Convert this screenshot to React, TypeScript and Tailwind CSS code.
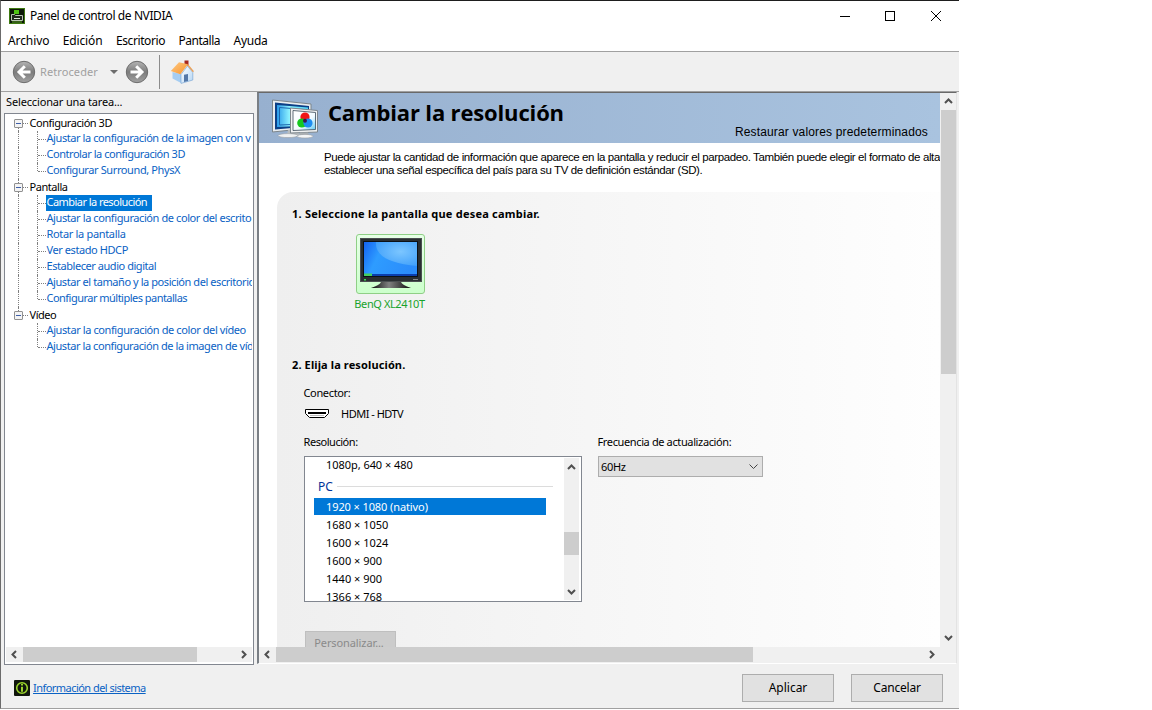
import { clsx } from "clsx";

const menu = [
  { label: "Archivo", track: "tracking-[-0.1px]" },
  { label: "Edición", track: "tracking-[-0.15px]" },
  { label: "Escritorio", track: "tracking-[-0.4px]" },
  { label: "Pantalla", track: "tracking-[-0.5px]" },
  { label: "Ayuda", track: "tracking-[-0.25px]" },
];

const tasks = [
  {
    title: "Configuración 3D",
    track: "tracking-[-0.46px]",
    items: [
      { label: "Ajustar la configuración de la imagen con v", track: "tracking-[-0.42px]" },
      { label: "Controlar la configuración 3D", track: "tracking-[-0.46px]" },
      { label: "Configurar Surround, PhysX", track: "tracking-[-0.39px]" },
    ],
  },
  {
    title: "Pantalla",
    track: "tracking-[-0.45px]",
    items: [
      { label: "Cambiar la resolución", track: "tracking-[-0.55px]", active: true },
      { label: "Ajustar la configuración de color del escrito", track: "tracking-[-0.41px]" },
      { label: "Rotar la pantalla", track: "tracking-[-0.33px]" },
      { label: "Ver estado HDCP", track: "tracking-[-0.42px]" },
      { label: "Establecer audio digital", track: "tracking-[-0.45px]" },
      { label: "Ajustar el tamaño y la posición del escritorio", track: "tracking-[-0.43px]" },
      { label: "Configurar múltiples pantallas", track: "tracking-[-0.52px]" },
    ],
  },
  {
    title: "Vídeo",
    track: "tracking-[-0.45px]",
    items: [
      { label: "Ajustar la configuración de color del vídeo", track: "tracking-[-0.4px]" },
      { label: "Ajustar la configuración de la imagen de víd", track: "tracking-[-0.43px]" },
    ],
  },
];

const resolutions = [
  "1920 × 1080 (nativo)",
  "1680 × 1050",
  "1600 × 1024",
  "1600 × 900",
  "1440 × 900",
  "1366 × 768",
];

const arrows = {
  up: "M1 6 L4.5 2.5 L8 6",
  down: "M1 3 L4.5 6.5 L8 3",
  left: "M6 1 L2.5 4.5 L6 8",
  right: "M3 1 L6.5 4.5 L3 8",
};

function Arrow({ dir }: { dir: keyof typeof arrows }) {
  return (
    <svg width="9" height="9" viewBox="0 0 9 9" className="shrink-0">
      <path d={arrows[dir]} fill="none" stroke="#505050" strokeWidth="2" />
    </svg>
  );
}

function AppIcon() {
  return (
    <svg width="16" height="16" viewBox="0 0 16 16">
      <rect width="16" height="16" fill="#0d1a08" />
      <rect x="0.5" y="0.5" width="15" height="15" fill="none" stroke="#3f7a12" />
      <rect x="5" y="2" width="5" height="4" fill="#4fc414" />
      <path d="M2.5 6.5h3l1 1h7v5h-11z" fill="#20281d" stroke="#b9c4b4" />
      <path d="M5 10.5h6" stroke="#dfe8da" />
      <path d="M3 14h10" stroke="#63a82a" />
    </svg>
  );
}

function NavCircle({ flip }: { flip?: boolean }) {
  return (
    <svg
      width="24"
      height="24"
      viewBox="0 0 24 24"
      className={clsx("shrink-0", flip && "-scale-x-100")}
    >
      <defs>
        <linearGradient id="disc" x1="0" y1="0" x2="0" y2="1">
          <stop offset="0" stopColor="#b4b4b4" />
          <stop offset="0.5" stopColor="#7c7c7c" />
          <stop offset="1" stopColor="#a2a2a2" />
        </linearGradient>
      </defs>
      <circle cx="12" cy="12" r="10.7" fill="url(#disc)" stroke="#6c6c6c" />
      <path
        d="M12.8 6.2 L7 12 L12.8 17.8 M7.5 12 H18.5"
        fill="none"
        stroke="#fff"
        strokeWidth="3"
      />
    </svg>
  );
}

function HomeIcon() {
  return (
    <svg width="24" height="24" viewBox="0 0 24 24">
      <defs>
        <linearGradient id="roof" x1="0" y1="0" x2="1" y2="1">
          <stop offset="0" stopColor="#ffc982" />
          <stop offset="1" stopColor="#f7942e" />
        </linearGradient>
        <linearGradient id="wall" x1="0" y1="0" x2="1" y2="1">
          <stop offset="0" stopColor="#ffffff" />
          <stop offset="1" stopColor="#b4d6f5" />
        </linearGradient>
      </defs>
      <path d="M2.5 12 L11 14 V23 L2.5 18.5z" fill="#a5cdf2" />
      <path d="M11 14.5 L17.5 6 L22.8 12.5 V20 L11 23.4z" fill="url(#wall)" stroke="#7fa9d6" strokeWidth="0.7" />
      <path d="M14 14.8 l4 -0.8 v7 l-4 1.1z" fill="#5478a8" />
      <rect x="14.5" y="0.5" width="4" height="5" fill="#a5281e" />
      <path d="M0.8 11 L9 2.2 L18 4.2 L10.4 14.2z" fill="url(#roof)" />
      <path d="M17.6 4.6 L23.4 11.8" fill="none" stroke="#e9a058" strokeWidth="1.4" />
    </svg>
  );
}

function ResolutionIcon() {
  return (
    <svg width="48" height="40" viewBox="0 0 48 40">
      <defs>
        <linearGradient id="screen" x1="0" y1="0" x2="1" y2="0">
          <stop offset="0" stopColor="#2a9bea" />
          <stop offset="0.4" stopColor="#8df2ff" />
          <stop offset="1" stopColor="#4fd2f8" />
        </linearGradient>
        <linearGradient id="paper" x1="0" y1="0" x2="1" y2="1">
          <stop offset="0" stopColor="#ffffff" />
          <stop offset="0.6" stopColor="#f2fbff" />
          <stop offset="1" stopColor="#5cc8f2" />
        </linearGradient>
      </defs>
      <path d="M1.5 1 L40 5 V29 L1.5 33z" fill="#e9edf0" stroke="#7d868c" />
      <path d="M4 3.5 L38 7 V27.5 L4 30.5z" fill="#0b3f86" />
      <path d="M6 6 L37 8.5 V26.5 L6 28z" fill="url(#screen)" />
      <path d="M8.5 8.5 L33 10.5 V25 L8.5 26z" fill="none" stroke="#1c67ad" />
      <path d="M17 31 h10 l2 5 h-13z" fill="#b9bec1" />
      <ellipse cx="17" cy="36.6" rx="10" ry="2" fill="#eff1f2" stroke="#9aa0a4" strokeWidth="0.6" />
      <path d="M19.5 9 L46.5 11.5 V33 L19.5 34z" fill="#f0f2f3" stroke="#7d868c" />
      <path d="M22 11.5 L44.5 13.5 V30.5 L22 31.5z" fill="url(#paper)" stroke="#3a4a58" strokeWidth="0.8" />
      <path d="M29 33.5 h8 l1 3 h-9z" fill="#a9aeb1" />
      <ellipse cx="34" cy="37.2" rx="8" ry="1.8" fill="#f4f5f6" stroke="#9aa0a4" strokeWidth="0.6" />
      <circle cx="34" cy="18" r="4.6" fill="#f01616" />
      <circle cx="30.8" cy="24" r="4.6" fill="#15c81f" />
      <circle cx="37" cy="24" r="4.6" fill="#1d8df0" />
      <circle cx="34" cy="21.8" r="2" fill="#3a1450" />
    </svg>
  );
}

function MonitorIcon() {
  return (
    <svg width="62" height="52" viewBox="0 0 62 52">
      <defs>
        <linearGradient id="desk" x1="0" y1="0" x2="1" y2="0.3">
          <stop offset="0" stopColor="#1463f2" />
          <stop offset="0.35" stopColor="#2e9cff" />
          <stop offset="1" stopColor="#2b8dfb" />
        </linearGradient>
        <radialGradient id="swoosh" cx="0.6" cy="0.4" r="0.7">
          <stop offset="0" stopColor="#7cc6ff" />
          <stop offset="1" stopColor="#3f9ffa" />
        </radialGradient>
        <linearGradient id="stand" x1="0" y1="0" x2="1" y2="0">
          <stop offset="0" stopColor="#0c0c0c" />
          <stop offset="0.45" stopColor="#808080" />
          <stop offset="1" stopColor="#0c0c0c" />
        </linearGradient>
      </defs>
      <rect x="0.5" y="0.5" width="61" height="43" fill="#2a2e31" stroke="#4a4e51" />
      <rect x="3" y="3" width="55" height="36" fill="#0c1116" />
      <rect x="4" y="4" width="53" height="34" fill="url(#desk)" />
      <path d="M16 4 C15 17 27 25 57 28 V4z" fill="url(#swoosh)" />
      <rect x="4" y="36" width="53" height="2" fill="#0b3fae" />
      <rect x="4" y="35.5" width="8" height="2.5" fill="#43cf5f" />
      <rect x="4" y="41" width="2" height="1.5" fill="#38e04c" />
      <path d="M53 41.5h5" stroke="#888" />
      <path d="M21 44 h20 q1 3 10 6 H11 q9 -3 10 -6z" fill="url(#stand)" />
    </svg>
  );
}

function TaskTree() {
  return (
    <div className="h-[533px] overflow-hidden pt-px pr-px text-[11px] leading-4 whitespace-nowrap">
      {tasks.map((group, g) => {
        const last = g === tasks.length - 1;
        return (
          <div key={group.title}>
            <div className="flex h-4 items-center pl-[9px]">
              <div className="flex h-4 w-[9px] flex-col items-center">
                <span className={clsx("h-1 w-px", g > 0 && "border-l border-dotted border-[#808080]")} />
                <span className="flex size-[9px] shrink-0 items-center justify-center rounded-[1px] border border-[#919191] bg-[#f4f4f4]">
                  <span className="h-px w-[5px] bg-[#3f5fa8]" />
                </span>
                <span className={clsx("h-[3px] w-px", !last && "border-l border-dotted border-[#808080]")} />
              </div>
              <span className="w-[5px] border-t border-dotted border-[#808080]" />
              <span className={clsx("ml-[1.5px] text-black", group.track)}>{group.title}</span>
            </div>
            {group.items.map((item, i) => (
              <div key={item.label} className="flex h-4 overflow-hidden pl-[13px]">
                <span className={clsx("h-4 w-[19px] shrink-0", !last && "border-l border-dotted border-[#808080]")} />
                <span
                  className={clsx(
                    "shrink-0 border-l border-dotted border-[#808080]",
                    i === group.items.length - 1 ? "h-2" : "h-4",
                  )}
                />
                <span className="mt-2 h-px w-2 shrink-0 border-t border-dotted border-[#808080]" />
                <span
                  className={clsx(
                    "h-4 shrink-0 pl-[0.5px] leading-[14px]",
                    item.track,
                    item.active ? "w-[106px] bg-[#0078d7] text-white" : "text-[#0a62c4]",
                  )}
                >
                  {item.label}
                </span>
              </div>
            ))}
          </div>
        );
      })}
    </div>
  );
}

function TitleBar() {
  return (
    <div className="flex h-[29px] items-center bg-white pl-2">
      <AppIcon />
      <span className="ml-[5px] text-[12px] tracking-[-0.4px]">Panel de control de NVIDIA</span>
      <svg width="104" height="12" viewBox="0 0 104 12" className="mr-4 ml-auto" fill="none" stroke="#000">
        <path d="M1 6.5h10" />
        <rect x="46.5" y="1.5" width="9" height="9" />
        <path d="M92 1l10 10M102 1l-10 10" />
      </svg>
    </div>
  );
}

function Toolbar() {
  return (
    <div className="flex h-[40px] items-center border-b border-[#a0a0a0] pl-[11px]">
      <NavCircle />
      <span className="ml-1 w-[70px] pt-[2px] text-[11px] tracking-[0.1px] text-[#a0a0a0]">Retroceder</span>
      <svg width="8" height="4" viewBox="0 0 8 4">
        <path d="M0 0h8L4 4z" fill="#6d6d6d" />
      </svg>
      <span className="w-[7px]" />
      <NavCircle flip />
      <span className="ml-[10px] h-[34px] w-px bg-[#8c8c8c]" />
      <span className="ml-[10px]">
        <HomeIcon />
      </span>
    </div>
  );
}

function ResolutionList() {
  return (
    <div className="flex h-[146px] w-[278px] border border-[#828790] bg-white">
      <div className="h-[144px] flex-1 overflow-hidden pl-[9px] text-[11px]">
        <div className="h-4 pl-3 leading-4 tracking-[-0.05px]">1080p, 640 × 480</div>
        <div className="flex h-[25px] items-center pt-px pl-1">
          <span className="pt-px text-[12px] text-[#003399]">PC</span>
          <span className="ml-1 h-px w-[216px] bg-[#dcdcdc]" />
        </div>
        {resolutions.map((res, i) => (
          <div
            key={res}
            className={clsx(
              "mb-px h-[17px] w-[232px] pl-3 leading-[17px]",
              i === 0 && "bg-[#0078d7] tracking-[-0.1px] text-white",
            )}
          >
            {res}
          </div>
        ))}
      </div>
      <div className="mt-px mr-[2px] flex h-[142px] w-[15px] flex-col items-center bg-[#f0f0f0] pt-[5px] pb-1">
        <Arrow dir="up" />
        <span className="mt-[60px] h-[23px] w-full bg-[#cdcdcd]" />
        <span className="mt-auto flex">
          <Arrow dir="down" />
        </span>
      </div>
    </div>
  );
}

function Content() {
  return (
    <div className="h-[554px] w-[681px] overflow-hidden bg-white">
      <div className="flex h-[50px] bg-linear-to-r from-[#97b0cf] to-[#a9c3df] pl-3">
        <div className="pt-[6px]">
          <ResolutionIcon />
        </div>
        <h1 className="ml-[9px] pt-1 font-['Open_Sans'] text-[22px] leading-[30px] font-bold tracking-[-0.15px] whitespace-nowrap">
          Cambiar la resolución
        </h1>
        <span className="mt-[31px] mr-3 ml-auto font-['Liberation_Sans'] text-[12px] leading-4 tracking-[0.15px] whitespace-nowrap">
          Restaurar valores predeterminados
        </span>
      </div>
      <p className="h-[49px] pt-2 pl-[65px] font-['Liberation_Sans'] text-[11.5px] leading-[13px] tracking-[-0.39px] whitespace-nowrap">
        Puede ajustar la cantidad de información que aparece en la pantalla y reducir el parpadeo. También puede elegir el formato de alta
        <br />
        establecer una señal específica del país para su TV de definición estándar (SD).
      </p>
      <div className="ml-[18px] h-[455px] rounded-tl-[16px] bg-linear-to-r from-[#efefef] to-[#fefefe] pl-[15px]">
        <h2 className="pt-[14px] text-[11px] leading-4 font-bold tracking-[0.22px]">
          1. Seleccione la pantalla que desea cambiar.
        </h2>
        <div className="mt-3 ml-[62px] flex w-[73px] flex-col items-center">
          <div className="flex h-[60px] w-[69px] justify-center rounded-[3px] border border-[#8fcf86] bg-linear-to-b from-[#e6ffe6] to-[#ccffcc] pt-[3px]">
            <MonitorIcon />
          </div>
          <span className="mt-[2px] mr-[2px] text-[11px] leading-4 tracking-[-0.4px] whitespace-nowrap text-[#18a32b]">
            BenQ XL2410T
          </span>
        </div>
        <h2 className="mt-[45px] text-[11px] leading-4 font-bold tracking-[0.12px]">2. Elija la resolución.</h2>
        <div className="ml-[11.5px] text-[11px]">
          <div className="mt-3 leading-4 tracking-[-0.35px]">Conector:</div>
          <div className="mt-[5px] flex h-4 items-center">
            <svg width="25" height="10" viewBox="0 0 25 10" className="ml-[1.5px]">
              <path d="M0.5 0.5h23v4l-4 4h-15l-4 -4z" fill="#fff" stroke="#000" />
              <path d="M3 3h18v2h-18z" fill="#000" />
              <path d="M5 6.5h14" stroke="#bbb" />
            </svg>
            <span className="ml-[11px] tracking-[-0.5px]">HDMI - HDTV</span>
          </div>
          <div className="mt-3 flex">
            <div className="w-[294px]">
              <div className="mb-[6px] leading-4 tracking-[-0.45px]">Resolución:</div>
              <div className="pl-[0.5px]">
                <ResolutionList />
              </div>
            </div>
            <div>
              <div className="mb-[6px] leading-4 tracking-[-0.37px]">Frecuencia de actualización:</div>
              <div className="ml-[0.5px] flex h-[21px] w-[165px] items-center justify-between border border-[#adadad] bg-[#e1e1e1] pr-1 pl-[2px]">
                <span className="pt-px tracking-[-0.3px]">60Hz</span>
                <svg width="9" height="6" viewBox="0 0 9 6" fill="none" stroke="#444">
                  <path d="M0.5 0.5L4.5 4.5L8.5 0.5" />
                </svg>
              </div>
            </div>
          </div>
          <button className="mt-[29px] ml-[1.5px] block h-[23px] w-[91px] border border-[#bfbfbf] bg-[#cccccc] pt-[2px] pr-[3px] tracking-[-0.1px] text-[#8a8a8a]">
            Personalizar...
          </button>
        </div>
      </div>
    </div>
  );
}

function App() {
  return (
    <div className="h-[710px] w-[1152px] overflow-hidden bg-white font-['Noto_Sans',sans-serif] text-black">
      <div className="flex h-[709px] w-[959px] flex-col border-t border-b border-l border-t-[#1e1e1e] border-b-[#a0a0a0] border-l-[#6b6b6b] bg-[#f0f0f0]">
        <TitleBar />
        <nav className="flex h-[22px] shrink-0 items-center gap-[13.5px] border-b border-[#a0a0a0] bg-white pl-[7px] text-[12px] leading-[22px]">
          {menu.map((entry) => (
            <span key={entry.label} className={entry.track}>
              {entry.label}
            </span>
          ))}
        </nav>
        <Toolbar />
        <div className="flex h-[573px] shrink-0">
          <aside className="w-[256px] pl-[3px]">
            <div className="h-[21px] pl-[2px] text-[11px] leading-[19px] tracking-[-0.15px]">Seleccionar una tarea...</div>
            <div className="h-[552px] w-[250px] border border-[#828790] bg-white">
              <TaskTree />
              <div className="mx-px flex h-[15px] items-center bg-[#f0f0f0] pr-1 pl-[4px]">
                <Arrow dir="left" />
                <span className="ml-1 h-[15px] w-[174px] bg-[#cdcdcd]" />
                <span className="ml-auto">
                  <Arrow dir="right" />
                </span>
              </div>
            </div>
          </aside>
          <main className="h-[572px] w-[700px] border-t border-r border-b border-l-2 border-t-[#696969] border-r-[#e3e3e3] border-b-white border-l-[#7a7f85]">
            <div className="flex">
              <Content />
              <div className="ml-px flex h-[554px] w-[15px] flex-col items-center bg-[#f0f0f0] pt-1 pb-[5px]">
                <Arrow dir="up" />
                <span className="mt-1 h-[264px] w-full bg-[#cdcdcd]" />
                <span className="mt-auto flex">
                  <Arrow dir="down" />
                </span>
              </div>
            </div>
            <div className="flex h-[15px] items-center pl-1">
              <Arrow dir="left" />
              <span className="ml-1 h-[15px] w-[477px] bg-[#cdcdcd]" />
              <span className="mr-5 ml-auto">
                <Arrow dir="right" />
              </span>
            </div>
          </main>
        </div>
        <footer className="flex flex-1 items-center pt-[3px] pl-[13px] text-[12px]">
          <svg width="16" height="16" viewBox="0 0 16 16">
            <rect width="16" height="16" rx="1" fill="#10160c" />
            <circle cx="8" cy="8" r="5.3" fill="none" stroke="#9bd62c" strokeWidth="1.6" />
            <path d="M8 4v1.6M8 6.8v5" stroke="#9bd62c" strokeWidth="2" />
          </svg>
          <a href="#" className="ml-[3px] text-[11px] tracking-[-0.54px] text-[#0a62c4] underline">
            Información del sistema
          </a>
          <button className="ml-auto h-7 w-[92px] border border-[#adadad] bg-[#e1e1e1]">Aplicar</button>
          <button className="mr-4 ml-[17px] h-7 w-[92px] border border-[#adadad] bg-[#e1e1e1] tracking-[-0.2px]">
            Cancelar
          </button>
        </footer>
      </div>
    </div>
  );
}

export default App;
